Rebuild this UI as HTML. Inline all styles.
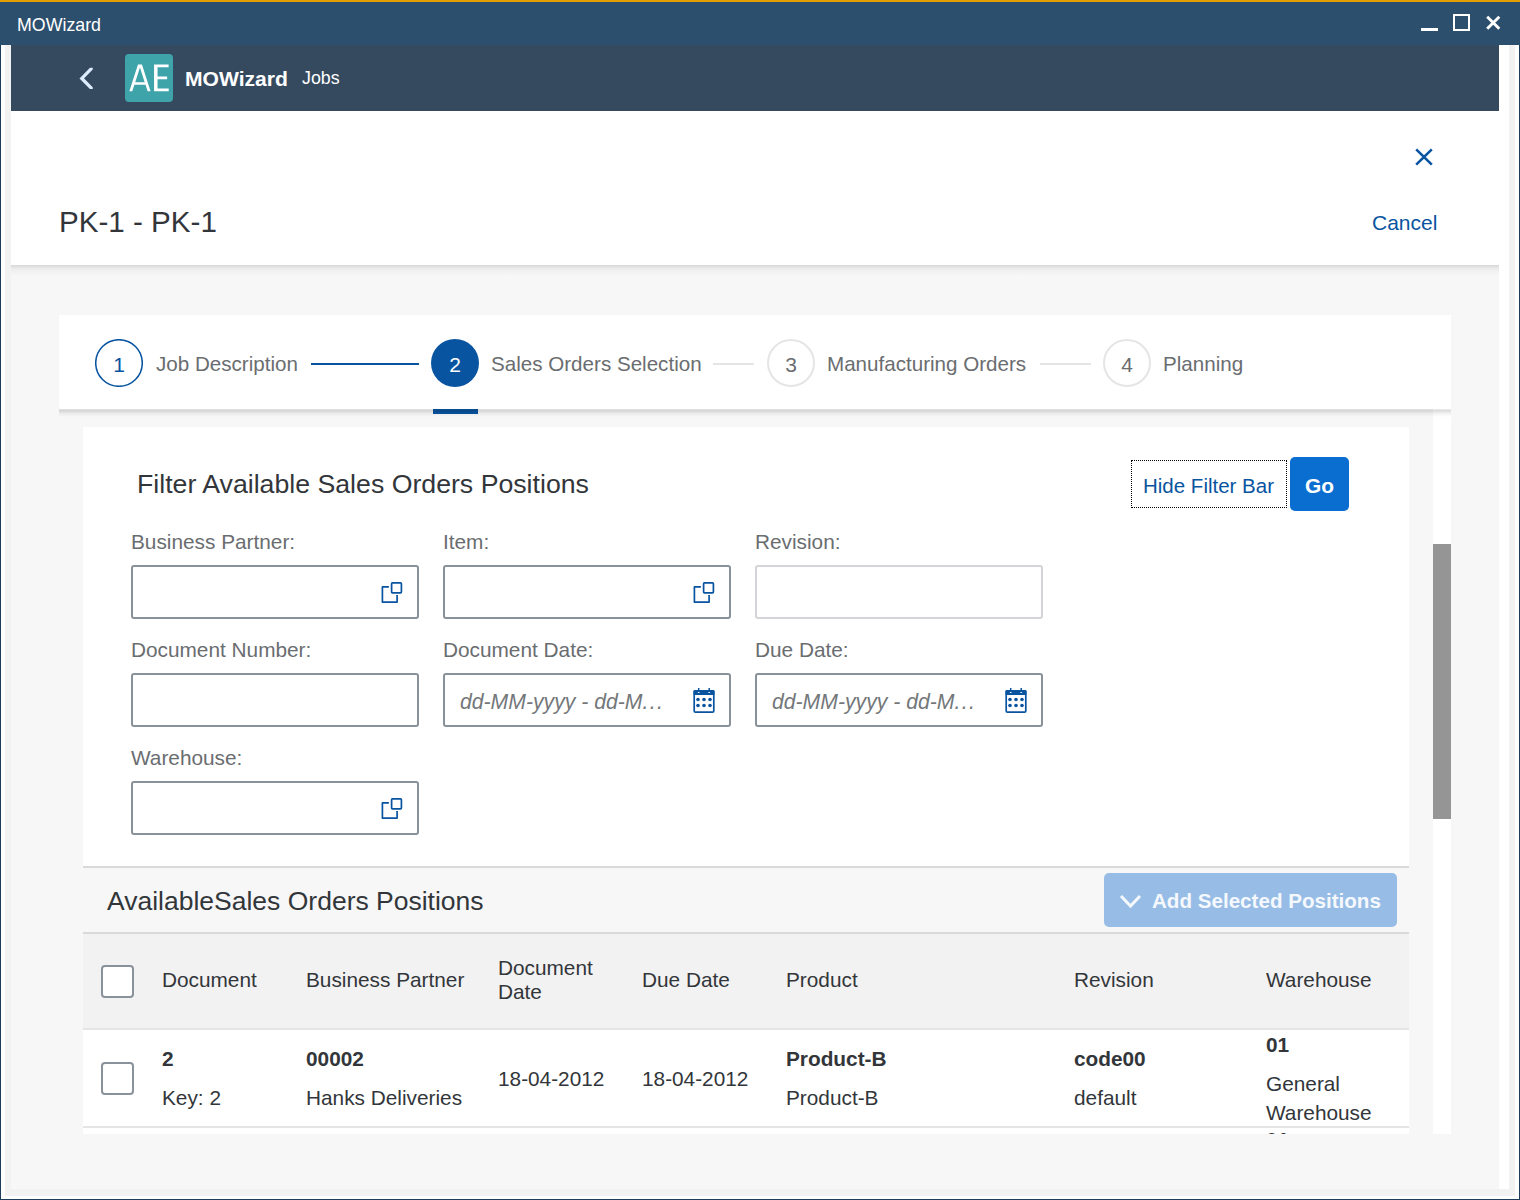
<!DOCTYPE html>
<html><head><meta charset="utf-8">
<style>
*{box-sizing:border-box;margin:0;padding:0}
html,body{width:1520px;height:1200px;overflow:hidden;background:#fff;font-family:"Liberation Sans",sans-serif;color:#32363a}
.a{position:absolute}
.t{position:absolute;white-space:nowrap;line-height:1}
.lbl{font-size:20.8px;color:#6a6d70}
.inp{width:288px;height:54px;border:2px solid #89919a;border-radius:3px;background:#fff}
.inp.dis{border-color:#d3d5d8}
.ph{font-size:21.2px;font-style:italic;color:#74777a}
.cb{width:33px;height:33px;border:2px solid #89919a;border-radius:4px;background:#fff}
.th{font-size:20.8px;color:#32363a}
.td{font-size:20.8px;color:#32363a}
.b{font-weight:700}
.sl{font-size:20.6px;color:#6a6d70}
.dg{width:48px;text-align:center;font-size:21px}
</style></head><body>
<!-- window frame -->
<div class="a" style="left:0;top:0;width:1520px;height:1200px;background:#fff;border:1px solid #1e3d5c;border-top:none"></div>
<!-- title bar -->
<div class="a" style="left:0;top:0;width:1520px;height:45px;background:#2d4f6e"></div>
<div class="a" style="left:0;top:0;width:1520px;height:2px;background:#e3a000"></div>
<div class="t" style="left:17px;top:17px;font-size:17.8px;color:#fff">MOWizard</div>
<div class="a" style="left:1421px;top:28px;width:17px;height:3px;background:#fff"></div>
<div class="a" style="left:1453px;top:14px;width:17px;height:17px;border:2px solid #fff"></div>
<svg class="a" style="left:1484px;top:14px" width="18" height="18" viewBox="0 0 18 18"><path d="M3.2 2.8L15.3 14.8M15.3 2.8L3.2 14.8" stroke="#fff" stroke-width="2.9"/></svg>

<!-- grey frame / app -->
<div class="a" style="left:5px;top:45px;width:1510px;height:1151px;background:#f2f2f2"></div>
<div class="a" style="left:11px;top:45px;width:1498px;height:1144px;background:#fff"></div>
<div class="a" style="left:11px;top:110px;width:1488px;height:1079px;background:#f7f7f7"></div>

<!-- shell header -->
<div class="a" style="left:11px;top:45px;width:1488px;height:66px;background:#354a5f"></div>
<svg class="a" style="left:70px;top:60px" width="30" height="36" viewBox="0 0 30 36"><clipPath id="cc"><rect x="0" y="7.7" width="22.8" height="21.4"/></clipPath><path clip-path="url(#cc)" d="M22.5 7.5L11.8 18.4L22.5 29.3" fill="none" stroke="#dcecff" stroke-width="3.3" stroke-linecap="square"/></svg>
<div class="a" style="left:125px;top:54px;width:48px;height:48px;background:#3fa3aa;border-radius:4px"></div>
<svg class="a" style="left:125px;top:54px" width="48" height="48" viewBox="0 0 48 48"><path fill-rule="evenodd" fill="#fff" d="M4.33 37.3L12.97 10.47H16.93L25.56 37.3H22.62L20.52 30.76H9.38L7.27 37.3ZM10.2 28.2H19.69L14.95 13.45Z"/><path fill="#fff" d="M29.06 10.47H43.6V13.27H32.56V22.6H42.13V25.17H32.56V34.5H43.7V37.3H29.06Z"/></svg>
<div class="t" style="left:185px;top:68px;font-size:21.1px;font-weight:700;color:#fff">MOWizard</div>
<div class="t" style="left:302px;top:70px;font-size:17.8px;color:#fff">Jobs</div>

<!-- white page header -->
<div class="a" style="left:11px;top:111px;width:1488px;height:154px;background:#fff"></div>
<div class="a" style="left:11px;top:265px;width:1488px;height:11px;background:linear-gradient(rgba(0,0,0,.13),rgba(0,0,0,.09) 15%,rgba(0,0,0,.045) 35%,rgba(0,0,0,.02) 65%,rgba(0,0,0,0))"></div>
<svg class="a" style="left:1412px;top:146px" width="24" height="24" viewBox="0 0 24 24"><path d="M4.2 3.4L19.8 18.6M19.8 3.4L4.2 18.6" stroke="#0854a0" stroke-width="2.6"/></svg>
<div class="t" style="left:59px;top:207px;font-size:29.6px;color:#32363a">PK-1 - PK-1</div>
<div class="t" style="left:1372px;top:212px;font-size:21px;color:#0854a0">Cancel</div>

<!-- stepper -->
<div class="a" style="left:59px;top:315px;width:1392px;height:94px;background:#fff"></div>
<svg class="a" style="left:95px;top:339px" width="48" height="48"><circle cx="24" cy="24" r="23.3" fill="none" stroke="#0854a0" stroke-width="1.5"/></svg>
<div class="t dg" style="left:95px;top:354px;color:#0854a0">1</div>
<div class="t sl" style="left:156px;top:354px">Job Description</div>
<div class="a" style="left:311px;top:363px;width:108px;height:2px;background:#0854a0"></div>
<div class="a" style="left:431px;top:339px;width:48px;height:48px;background:#0854a0;border-radius:50%"></div>
<div class="t dg" style="left:431px;top:354px;color:#fff">2</div>
<div class="t sl" style="left:491px;top:354px">Sales Orders Selection</div>
<div class="a" style="left:713px;top:363px;width:41px;height:2px;background:#e5e5e5"></div>
<svg class="a" style="left:767px;top:339px" width="48" height="48"><circle cx="24" cy="24" r="23" fill="none" stroke="#e5e5e5" stroke-width="2"/></svg>
<div class="t dg" style="left:767px;top:354px;color:#6a6d70">3</div>
<div class="t sl" style="left:827px;top:354px">Manufacturing Orders</div>
<div class="a" style="left:1040px;top:363px;width:51px;height:2px;background:#e5e5e5"></div>
<svg class="a" style="left:1103px;top:339px" width="48" height="48"><circle cx="24" cy="24" r="23" fill="none" stroke="#e5e5e5" stroke-width="2"/></svg>
<div class="t dg" style="left:1103px;top:354px;color:#6a6d70">4</div>
<div class="t sl" style="left:1163px;top:354px">Planning</div>
<div class="a" style="left:433px;top:409px;width:45px;height:5px;background:#0854a0"></div>

<!-- scrollbar -->
<div class="a" style="left:1433px;top:409px;width:18px;height:725px;background:#fff"></div>
<div class="a" style="left:1433px;top:544px;width:18px;height:275px;background:#959595"></div>
<div class="a" style="left:59px;top:409px;width:1392px;height:8px;background:linear-gradient(rgba(0,0,0,.05),rgba(0,0,0,.14) 14%,rgba(0,0,0,.12) 28%,rgba(0,0,0,.05) 55%,rgba(0,0,0,0))"></div>

<!-- filter card -->
<div class="a" style="left:83px;top:427px;width:1326px;height:439px;background:#fff"></div>
<div class="t" style="left:137px;top:471px;font-size:26.7px;color:#32363a">Filter Available Sales Orders Positions</div>
<div class="a" style="left:1131px;top:460px;width:156px;height:48px;border:1px dotted #000"></div>
<div class="t" style="left:1143px;top:476px;font-size:20.5px;color:#0854a0">Hide Filter Bar</div>
<div class="a" style="left:1290px;top:457px;width:59px;height:54px;background:#0a6ed1;border-radius:5px"></div>
<div class="t" style="left:1290px;top:476px;width:59px;text-align:center;font-size:20.9px;font-weight:700;color:#fff">Go</div>

<div class="t lbl" style="left:131px;top:532px">Business Partner:</div>
<div class="t lbl" style="left:443px;top:532px">Item:</div>
<div class="t lbl" style="left:755px;top:532px">Revision:</div>
<div class="a inp" style="left:131px;top:565px"></div>
<div class="a inp" style="left:443px;top:565px"></div>
<div class="a inp dis" style="left:755px;top:565px"></div>
<svg class="a" style="left:376px;top:576px" width="32" height="32" viewBox="0 0 32 32"><rect x="15.6" y="6.9" width="9.8" height="9.9" rx="0.8" fill="none" stroke="#0854a0" stroke-width="1.7"/><path d="M12.9 10.9H6.4V26.1H21.1V18.9" fill="none" stroke="#0854a0" stroke-width="1.7" stroke-linejoin="round"/></svg>
<svg class="a" style="left:688px;top:576px" width="32" height="32" viewBox="0 0 32 32"><rect x="15.6" y="6.9" width="9.8" height="9.9" rx="0.8" fill="none" stroke="#0854a0" stroke-width="1.7"/><path d="M12.9 10.9H6.4V26.1H21.1V18.9" fill="none" stroke="#0854a0" stroke-width="1.7" stroke-linejoin="round"/></svg>

<div class="t lbl" style="left:131px;top:640px">Document Number:</div>
<div class="t lbl" style="left:443px;top:640px">Document Date:</div>
<div class="t lbl" style="left:755px;top:640px">Due Date:</div>
<div class="a inp" style="left:131px;top:673px"></div>
<div class="a inp" style="left:443px;top:673px"></div>
<div class="a inp" style="left:755px;top:673px"></div>
<div class="t ph" style="left:460px;top:691px">dd-MM-yyyy - dd-M<span style="letter-spacing:1.4px">...</span></div>
<div class="t ph" style="left:772px;top:691px">dd-MM-yyyy - dd-M<span style="letter-spacing:1.4px">...</span></div>
<svg class="a" style="left:688px;top:684px" width="32" height="32" viewBox="0 0 32 32"><rect x="6.2" y="6.8" width="19.6" height="21.3" rx="1.2" fill="none" stroke="#0854a0" stroke-width="1.7"/><rect x="5.5" y="6.1" width="21" height="4.8" rx="1" fill="#0854a0"/><rect x="9.95" y="4" width="1.5" height="3" fill="#0854a0"/><rect x="20.45" y="4" width="1.5" height="3" fill="#0854a0"/><ellipse cx="10.7" cy="8.5" rx="1" ry=".5" fill="#fff"/><ellipse cx="21.2" cy="8.5" rx="1" ry=".5" fill="#fff"/><g fill="#0854a0"><ellipse cx="10" cy="15.5" rx="1.8" ry="1.7"/><ellipse cx="16" cy="15.5" rx="1.8" ry="1.7"/><ellipse cx="22" cy="15.5" rx="1.8" ry="1.7"/><ellipse cx="10" cy="21.5" rx="1.8" ry="1.7"/><ellipse cx="16" cy="21.5" rx="1.8" ry="1.7"/><ellipse cx="22" cy="21.5" rx="1.8" ry="1.7"/></g></svg>
<svg class="a" style="left:1000px;top:684px" width="32" height="32" viewBox="0 0 32 32"><rect x="6.2" y="6.8" width="19.6" height="21.3" rx="1.2" fill="none" stroke="#0854a0" stroke-width="1.7"/><rect x="5.5" y="6.1" width="21" height="4.8" rx="1" fill="#0854a0"/><rect x="9.95" y="4" width="1.5" height="3" fill="#0854a0"/><rect x="20.45" y="4" width="1.5" height="3" fill="#0854a0"/><ellipse cx="10.7" cy="8.5" rx="1" ry=".5" fill="#fff"/><ellipse cx="21.2" cy="8.5" rx="1" ry=".5" fill="#fff"/><g fill="#0854a0"><ellipse cx="10" cy="15.5" rx="1.8" ry="1.7"/><ellipse cx="16" cy="15.5" rx="1.8" ry="1.7"/><ellipse cx="22" cy="15.5" rx="1.8" ry="1.7"/><ellipse cx="10" cy="21.5" rx="1.8" ry="1.7"/><ellipse cx="16" cy="21.5" rx="1.8" ry="1.7"/><ellipse cx="22" cy="21.5" rx="1.8" ry="1.7"/></g></svg>

<div class="t lbl" style="left:131px;top:748px">Warehouse:</div>
<div class="a inp" style="left:131px;top:781px"></div>
<svg class="a" style="left:376px;top:792px" width="32" height="32" viewBox="0 0 32 32"><rect x="15.6" y="6.9" width="9.8" height="9.9" rx="0.8" fill="none" stroke="#0854a0" stroke-width="1.7"/><path d="M12.9 10.9H6.4V26.1H21.1V18.9" fill="none" stroke="#0854a0" stroke-width="1.7" stroke-linejoin="round"/></svg>

<!-- table toolbar -->
<div class="a" style="left:83px;top:866px;width:1326px;height:2px;background:#d9d9d9"></div>
<div class="a" style="left:83px;top:868px;width:1326px;height:64px;background:#f7f7f7"></div>
<div class="t" style="left:107px;top:888px;font-size:26.5px;color:#32363a">AvailableSales Orders Positions</div>
<div class="a" style="left:1104px;top:873px;width:293px;height:54px;background:#97bde6;border-radius:5px"></div>
<svg class="a" style="left:1118px;top:891px" width="26" height="20" viewBox="0 0 26 20"><path d="M3 5L12.5 15L22 5" fill="none" stroke="#f5f8fc" stroke-width="3"/></svg>
<div class="t" style="left:1152px;top:891px;font-size:20.6px;font-weight:700;color:#f5f8fc">Add Selected Positions</div>
<div class="a" style="left:83px;top:932px;width:1326px;height:2px;background:#d9d9d9"></div>
<div class="a" style="left:83px;top:934px;width:1326px;height:94px;background:#f2f2f2"></div>
<div class="a cb" style="left:101px;top:965px"></div>
<div class="t th" style="left:162px;top:970px">Document</div>
<div class="t th" style="left:306px;top:970px">Business Partner</div>
<div class="t th" style="left:498px;top:958px">Document</div>
<div class="t th" style="left:498px;top:982px">Date</div>
<div class="t th" style="left:642px;top:970px">Due Date</div>
<div class="t th" style="left:786px;top:970px">Product</div>
<div class="t th" style="left:1074px;top:970px">Revision</div>
<div class="t th" style="left:1266px;top:970px">Warehouse</div>
<div class="a" style="left:83px;top:1028px;width:1326px;height:2px;background:#e5e5e5"></div>
<div class="a" style="left:83px;top:1030px;width:1326px;height:104px;background:#fff"></div>
<div class="a cb" style="left:101px;top:1062px"></div>
<div class="t td b" style="left:162px;top:1049px">2</div>
<div class="t td" style="left:162px;top:1088px">Key: 2</div>
<div class="t td b" style="left:306px;top:1049px">00002</div>
<div class="t td" style="left:306px;top:1088px">Hanks Deliveries</div>
<div class="t td" style="left:498px;top:1069px">18-04-2012</div>
<div class="t td" style="left:642px;top:1069px">18-04-2012</div>
<div class="t td b" style="left:786px;top:1049px">Product-B</div>
<div class="t td" style="left:786px;top:1088px">Product-B</div>
<div class="t td b" style="left:1074px;top:1049px">code00</div>
<div class="t td" style="left:1074px;top:1088px">default</div>
<div class="t td b" style="left:1266px;top:1035px">01</div>
<div class="t td" style="left:1266px;top:1074px">General</div>
<div class="t td" style="left:1266px;top:1103px">Warehouse</div>
<div class="a" style="left:83px;top:1126px;width:1326px;height:2px;background:#e5e5e5"></div>
<div class="a" style="left:1260px;top:1128px;width:60px;height:6px;overflow:hidden"><div class="t td b" style="left:6px;top:2px">01</div></div>
</body></html>
